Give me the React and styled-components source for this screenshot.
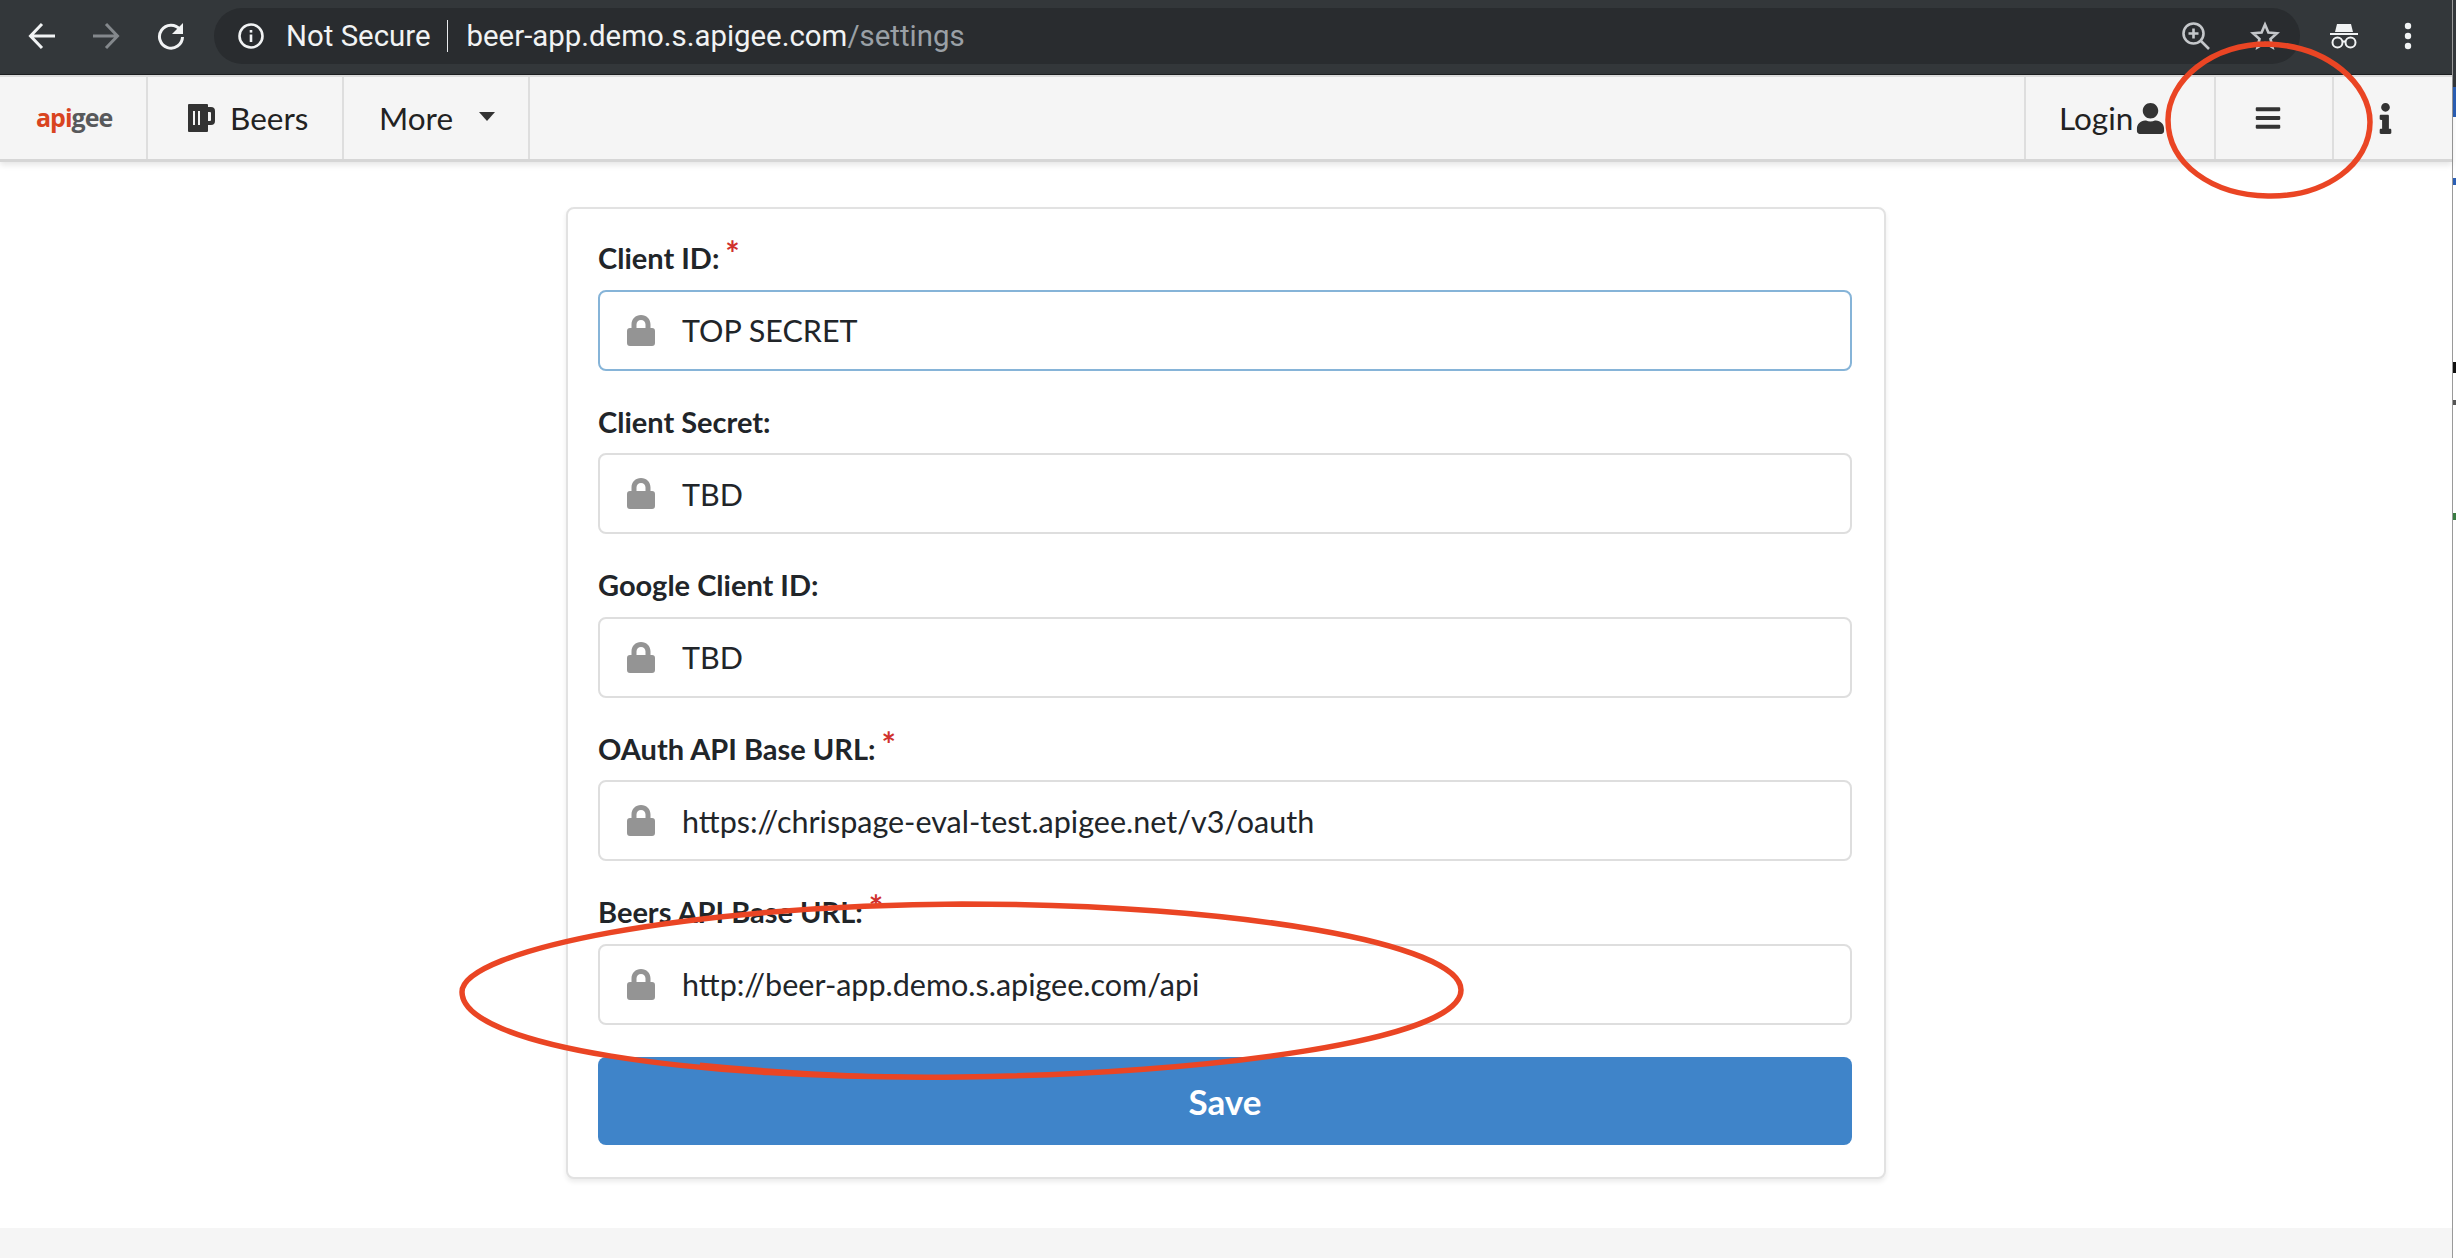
import React from 'react';
import styled, { createGlobalStyle } from 'styled-components';
import { FaUser, FaBars, FaInfo } from 'react-icons/fa';

const Global = createGlobalStyle`
    html, body {
        margin: 0;
        padding: 0;
        height: 1258px;
        overflow: hidden;
        background: #fff;
    }
    * { box-sizing: border-box; }
`;

const Page = styled.div`
    position: relative;
    width: 2456px;
    height: 1258px;
    display: flex;
`;

const Content = styled.div`
    width: 2452px;
    height: 1258px;
    display: flex;
    flex-direction: column;
`;

/* sliver of the window behind the browser */
const Sliver = styled.div`
    width: 4px;
    height: 1258px;
    border-left: 1px solid #9a9a9a;
    background: linear-gradient(to bottom,
        #33373a 0, #33373a 87px,
        #2b5fb5 87px, #2b5fb5 117px,
        #fff 117px, #fff 178px,
        #2b5fb5 178px, #2b5fb5 185px,
        #fff 185px, #fff 362px,
        #111 362px, #111 373px,
        #fff 373px, #fff 400px,
        #555 400px, #555 405px,
        #fff 405px, #fff 513px,
        #3a7d44 513px, #3a7d44 520px,
        #fff 520px);
`;

const ChromeBar = styled.div`
    height: 75px;
    flex: none;
    background: #33373a;
    border-bottom: 1px solid #1d1f21;
    display: flex;
    align-items: flex-start;
    padding-top: 8px;
    font-family: Roboto, sans-serif;
`;

const ChromeButton = styled.div`
    width: ${p => p.$w}px;
    height: 56px;
    flex: none;
    display: flex;
    align-items: center;
    justify-content: center;
`;

const AddressPill = styled.div`
    width: 2086px;
    height: 56px;
    flex: none;
    background: #292c2f;
    border-radius: 28px;
    display: flex;
    align-items: center;
    padding-left: 24px;
    color: #f1f3f4;
    font-size: 29.4px;
`;

const NotSecure = styled.span`
    margin-left: 22px;
    padding-right: 16px;
    border-right: 1px solid #e8eaed;
    line-height: 32px;
`;

const Url = styled.span`
    margin-left: 19px;
    span { color: #9aa0a6; }
`;

const PillIcons = styled.div`
    margin-left: auto;
    display: flex;
    align-items: center;
    gap: 40px;
    padding-right: 20px;
`;

const Nav = styled.nav`
    height: 87px;
    flex: none;
    background: #f5f5f5;
    border-top: 2px solid #dcdcdc;
    border-bottom: 3px solid #d6d6d6;
    box-shadow: 0 3px 6px rgba(0, 0, 0, 0.1);
    display: flex;
    font-family: Lato, sans-serif;
    font-size: 31.5px;
    color: #222;
    position: relative;
`;

const NavCell = styled.div`
    width: ${p => p.$w}px;
    flex: none;
    display: flex;
    align-items: center;
    gap: ${p => p.$gap || 0}px;
    padding-left: ${p => p.$pl || 0}px;
    border-right: 2px solid #dedede;
    &:last-child { border-right: none; }
`;

const Spacer = styled.div`
    flex: 1;
    border-right: 2px solid #dedede;
`;

const Logo = styled.span`
    font-family: "Open Sans", sans-serif;
    font-weight: 700;
    font-size: 25px;
    letter-spacing: -1px;
    color: #58595b;
    margin-top: -3px;
    b { color: #d9441f; font-weight: 700; }
`;

const Caret = styled.span`
    width: 0;
    height: 0;
    margin-left: 26px;
    margin-top: -4px;
    border-left: 8px solid transparent;
    border-right: 8px solid transparent;
    border-top: 9px solid #333;
`;

const Main = styled.main`
    flex: 1;
    display: flex;
    justify-content: center;
    align-items: flex-start;
    padding-top: 45px;
`;

const Card = styled.form`
    width: 1320px;
    height: 972px;
    background: #fff;
    border: 2px solid #e2e2e2;
    border-radius: 8px;
    box-shadow: 0 3px 5px rgba(0, 0, 0, 0.08);
    padding: 30px 32px 30px 30px;
    display: flex;
    flex-direction: column;
    gap: 32px;
    font-family: Lato, sans-serif;
`;

const Field = styled.div`
    display: flex;
    flex-direction: column;
`;

const Label = styled.label`
    height: 50.5px;
    padding-top: 1px;
    font-size: 29px;
    line-height: 36px;
    font-weight: 700;
    color: #212529;
`;

const Star = styled.span`
    color: #d0312d;
    font-size: 34px;
    line-height: 20px;
    position: relative;
    top: -3px;
    margin-left: 6px;
`;

const InputBox = styled.div`
    height: 81px;
    border: 2px solid ${p => (p.$focus ? '#86b4d8' : '#dedede')};
    border-radius: 8px;
    display: flex;
    align-items: center;
    gap: 27px;
    padding-left: 27px;
    font-size: 30.5px;
    color: #212529;
`;

const SaveButton = styled.button`
    height: 88px;
    border: none;
    border-radius: 8px;
    background: #3f84c9;
    color: #fff;
    font-family: Lato, sans-serif;
    font-weight: 700;
    font-size: 35px;
`;

const Footer = styled.footer`
    height: 30px;
    flex: none;
    background: #f5f5f5;
`;

const Scribble = styled.svg`
    position: absolute;
    left: 0;
    top: 0;
    width: 2456px;
    height: 1258px;
    pointer-events: none;
`;

const BackIcon = ({ color = '#f1f3f4', flip }) => (
    <svg width="28" height="28" viewBox="0 0 28 28" fill="none" stroke={color} strokeWidth="3"
        style={flip ? { transform: 'scaleX(-1)' } : undefined}>
        <path d="M27 14H3M14 2 2.5 14 14 26" />
    </svg>
);

const ReloadIcon = () => (
    <svg width="28" height="28" viewBox="0 0 28 28" fill="none">
        <path d="M23 7.5A11.5 11.5 0 1 0 25.5 15" stroke="#f1f3f4" strokeWidth="3" />
        <path d="M26 1v11H15z" fill="#f1f3f4" />
    </svg>
);

const InfoCircle = () => (
    <svg width="26" height="26" viewBox="0 0 26 26" fill="none" stroke="#f1f3f4">
        <circle cx="13" cy="13" r="11.5" strokeWidth="2.6" />
        <path d="M13 11.5V19" strokeWidth="2.6" />
        <path d="M13 7v2.6" strokeWidth="2.6" />
    </svg>
);

const ZoomIcon = () => (
    <svg width="28" height="28" viewBox="0 0 28 28" fill="none" stroke="#c4c7ca" strokeWidth="2.6">
        <circle cx="11.5" cy="11.5" r="10" />
        <path d="M11.5 6.5v10M6.5 11.5h10M19 19l8 8" />
    </svg>
);

const StarIcon = () => (
    <svg width="30" height="30" viewBox="0 0 30 30" fill="none" stroke="#c4c7ca" strokeWidth="2.6">
        <path d="M15 3.5l3.4 8 8.6.7-6.5 5.7 2 8.5L15 21.9l-7.5 4.5 2-8.5L3 12.2l8.6-.7z" />
    </svg>
);

const IncognitoIcon = () => (
    <svg width="28" height="28" viewBox="0 0 28 28" fill="#f1f3f4">
        <path d="M7 2h14l2 8H5z" />
        <path d="M0 11h28v2H0z" />
        <g fill="none" stroke="#f1f3f4" strokeWidth="2">
            <circle cx="7.5" cy="20.5" r="5" />
            <circle cx="20.5" cy="20.5" r="5" />
            <path d="M12 19.5h4" />
        </g>
    </svg>
);

const DotsIcon = () => (
    <svg width="8" height="30" viewBox="0 0 8 30" fill="#f1f3f4">
        <circle cx="4" cy="5" r="3.2" />
        <circle cx="4" cy="15" r="3.2" />
        <circle cx="4" cy="25" r="3.2" />
    </svg>
);

const MugIcon = () => (
    <svg width="28" height="28" viewBox="0 0 28 28">
        <path fill="#333" fillRule="evenodd"
            d="M2 0h18a1 1 0 0 1 1 1v2h3a4 4 0 0 1 4 4v10a4 4 0 0 1-4 4h-3v6a1 1 0 0 1-1 1H2a1 1 0 0 1-1-1V1a1 1 0 0 1 1-1zM6 7v14h2V7zm5 0v14h2V7zm10 1v9h2a1 1 0 0 0 1-1V9a1 1 0 0 0-1-1z" />
    </svg>
);

const LockIcon = () => (
    <svg width="28" height="31" viewBox="0 0 28 31" style={{ flex: 'none' }}>
        <path fill="#949494" fillRule="evenodd"
            d="M14 0c5.5 0 9.5 4 9.5 9.5V13H25a3 3 0 0 1 3 3v12a3 3 0 0 1-3 3H3a3 3 0 0 1-3-3V16a3 3 0 0 1 3-3h1.5V9.5C4.5 4 8.5 0 14 0zm0 5c-2.600 0-4.500 2-4.500 4.500V13h9V9.500C18.500 7 16.600 5 14 5z" />
    </svg>
);

const fields = [
    { label: 'Client ID:', value: 'TOP SECRET', required: true, focus: true },
    { label: 'Client Secret:', value: 'TBD' },
    { label: 'Google Client ID:', value: 'TBD' },
    { label: 'OAuth API Base URL:', value: 'https://chrispage-eval-test.apigee.net/v3/oauth', required: true },
    { label: 'Beers API Base URL:', value: 'http://beer-app.demo.s.apigee.com/api', required: true },
];

const App = () => {
    return (
        <Page>
            <Global />
            <Content>
                <ChromeBar>
                    <ChromeButton $w={84}><BackIcon /></ChromeButton>
                    <ChromeButton $w={44}><BackIcon color="#84888c" flip /></ChromeButton>
                    <ChromeButton $w={86}><ReloadIcon /></ChromeButton>
                    <AddressPill>
                        <InfoCircle />
                        <NotSecure>Not Secure</NotSecure>
                        <Url>beer-app.demo.s.apigee.com<span>/settings</span></Url>
                        <PillIcons>
                            <ZoomIcon />
                            <StarIcon />
                        </PillIcons>
                    </AddressPill>
                    <ChromeButton $w={88}><IncognitoIcon /></ChromeButton>
                    <ChromeButton $w={40}><DotsIcon /></ChromeButton>
                </ChromeBar>
                <Nav>
                    <NavCell $w={148} $pl={36}>
                        <Logo><b>api</b>gee</Logo>
                    </NavCell>
                    <NavCell $w={196} $pl={39} $gap={15}>
                        <MugIcon /> Beers
                    </NavCell>
                    <NavCell $w={186} $pl={35}>
                        More <Caret />
                    </NavCell>
                    <Spacer />
                    <NavCell $w={190} $pl={33} $gap={2}>
                        Login <FaUser size={31} color="#333" />
                    </NavCell>
                    <NavCell $w={118} $pl={38}>
                        <FaBars size={28} color="#333" />
                    </NavCell>
                    <NavCell $w={118} $pl={36}>
                        <FaInfo size={31} color="#333" />
                    </NavCell>
                </Nav>
                <Main>
                    <Card>
                        {fields.map(f => (
                            <Field key={f.label}>
                                <Label>
                                    {f.label}
                                    {f.required && <Star>*</Star>}
                                </Label>
                                <InputBox $focus={f.focus}>
                                    <LockIcon />
                                    {f.value}
                                </InputBox>
                            </Field>
                        ))}
                        <SaveButton type="button">Save</SaveButton>
                    </Card>
                </Main>
                <Footer />
            </Content>
            <Sliver />
            <Scribble viewBox="0 0 2456 1258" fill="none" stroke="#ea4524" strokeWidth="5.5">
                <path d="M2268 44C2328 46 2370 84 2370 122C2370 164 2326 197 2268 196C2212 195 2168 164 2168 120C2168 80 2212 44 2268 44Z" />
                <path d="M962 904C1240 904 1461 944 1461 990C1461 1040 1210 1074 960 1077C690 1080 462 1046 462 992C462 950 690 905 962 904Z" />
                <path d="M700 1064C800 1074 880 1077 960 1077" strokeWidth="3" />
            </Scribble>
        </Page>
    );
};

export default App;
